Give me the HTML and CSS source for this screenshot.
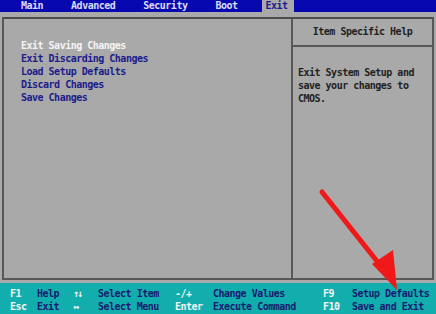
FILE: index.html
```html
<!DOCTYPE html>
<html lang="en">
  <head>
    <meta charset="UTF-8" />
    <meta name="viewport" content="width=device-width, initial-scale=1.0" />
    <title>BIOS Setup Utility - Exit</title>

    <link rel="stylesheet" href="styles.css">
  </head>
  <body>
    <nav class="tabs">
      <span class="tab">Main</span>
      <span class="tab">Advanced</span>
      <span class="tab">Security</span>
      <span class="tab">Boot</span>
      <span class="tab active">Exit</span>
    </nav>

    <main class="frame">
      <section class="menu">
        <div class="item selected">Exit Saving Changes</div>
        <div class="item">Exit Discarding Changes</div>
        <div class="item">Load Setup Defaults</div>
        <div class="item">Discard Changes</div>
        <div class="item">Save Changes</div>
      </section>
      <aside class="help">
        <div class="help-title">Item Specific Help</div>
        <p class="help-text">Exit System Setup and<br />save your changes to<br />CMOS.</p>
      </aside>
    </main>

    <footer class="keys">
      <span class="key">F1</span><span class="desc">Help</span>
      <span class="key arrows">&#8593;&#8595;</span><span class="desc">Select Item</span>
      <span class="key">-/+</span><span class="desc">Change Values</span>
      <span class="key">F9</span><span class="desc">Setup Defaults</span>

      <span class="key">Esc</span><span class="desc">Exit</span>
      <span class="key">&#8596;</span><span class="desc">Select Menu</span>
      <span class="key">Enter</span><span class="desc">Execute Command</span>
      <span class="key">F10</span><span class="desc">Save and Exit</span>
    </footer>

    <!-- red pointer drawn over the screen -->
    <svg class="pointer" width="436" height="314" viewBox="0 0 436 314">
      <line x1="322" y1="192" x2="384" y2="270" stroke="#f01818" stroke-width="5" stroke-linecap="round" />
      <polygon points="397,290 372,264 393,250" fill="#f01818" />
    </svg>
  </body>
</html>
```

FILE: styles.css
```css
body {
  margin: 0;
  width: 436px;
  height: 314px;
  background: #a9a9a9;
  font-family: "DejaVu Sans Mono", "Liberation Mono", monospace;
  font-size: 10px;
  font-weight: bold;
  letter-spacing: -0.5px;
  display: flex;
  flex-direction: column;
  position: relative;
  overflow: hidden;
}

.tabs {
  height: 12px;
  background: #0808b0;
  display: flex;
  gap: 20px;
  padding-left: 17px;
  align-items: stretch;
}

.tab {
  padding: 0 4px;
  line-height: 12px;
  color: #d8dcf4;
}

.tab.active {
  background: #a9a9a9;
  color: #1c1c8c;
  padding-right: 6px;
}

.frame {
  margin: 5px 2px 0 2px;
  height: 259px;
  border: 2px solid #585858;
  border-top-color: #4c4c4c;
  display: flex;
}

.menu {
  flex: 1;
  padding: 20px 0 0 17px;
}

.item {
  line-height: 13px;
  color: #1c1c8c;
}

.item.selected {
  color: #f4f4f4;
}

.help {
  width: 139px;
  border-left: 2px solid #585858;
  display: flex;
  flex-direction: column;
}

.help-title {
  height: 26px;
  line-height: 26px;
  text-align: center;
  color: #222;
  border-bottom: 2px solid #585858;
}

.help-text {
  margin: 0;
  padding: 19px 0 0 5px;
  line-height: 13px;
  color: #222;
}

.keys {
  margin-top: 3px;
  flex: 1;
  background: #12aeae;
  padding: 4px 0 0 10px;
  display: grid;
  grid-template-columns: 27px 36px 25px 77px 38px 110px 29px auto;
  grid-auto-rows: 13px;
  line-height: 13px;
}

.key {
  color: #f4f4f4;
}

.key.arrows {
  letter-spacing: -2px;
}

.desc {
  color: #1a1a70;
}

.pointer {
  position: absolute;
  left: 0;
  top: 0;
}
```
